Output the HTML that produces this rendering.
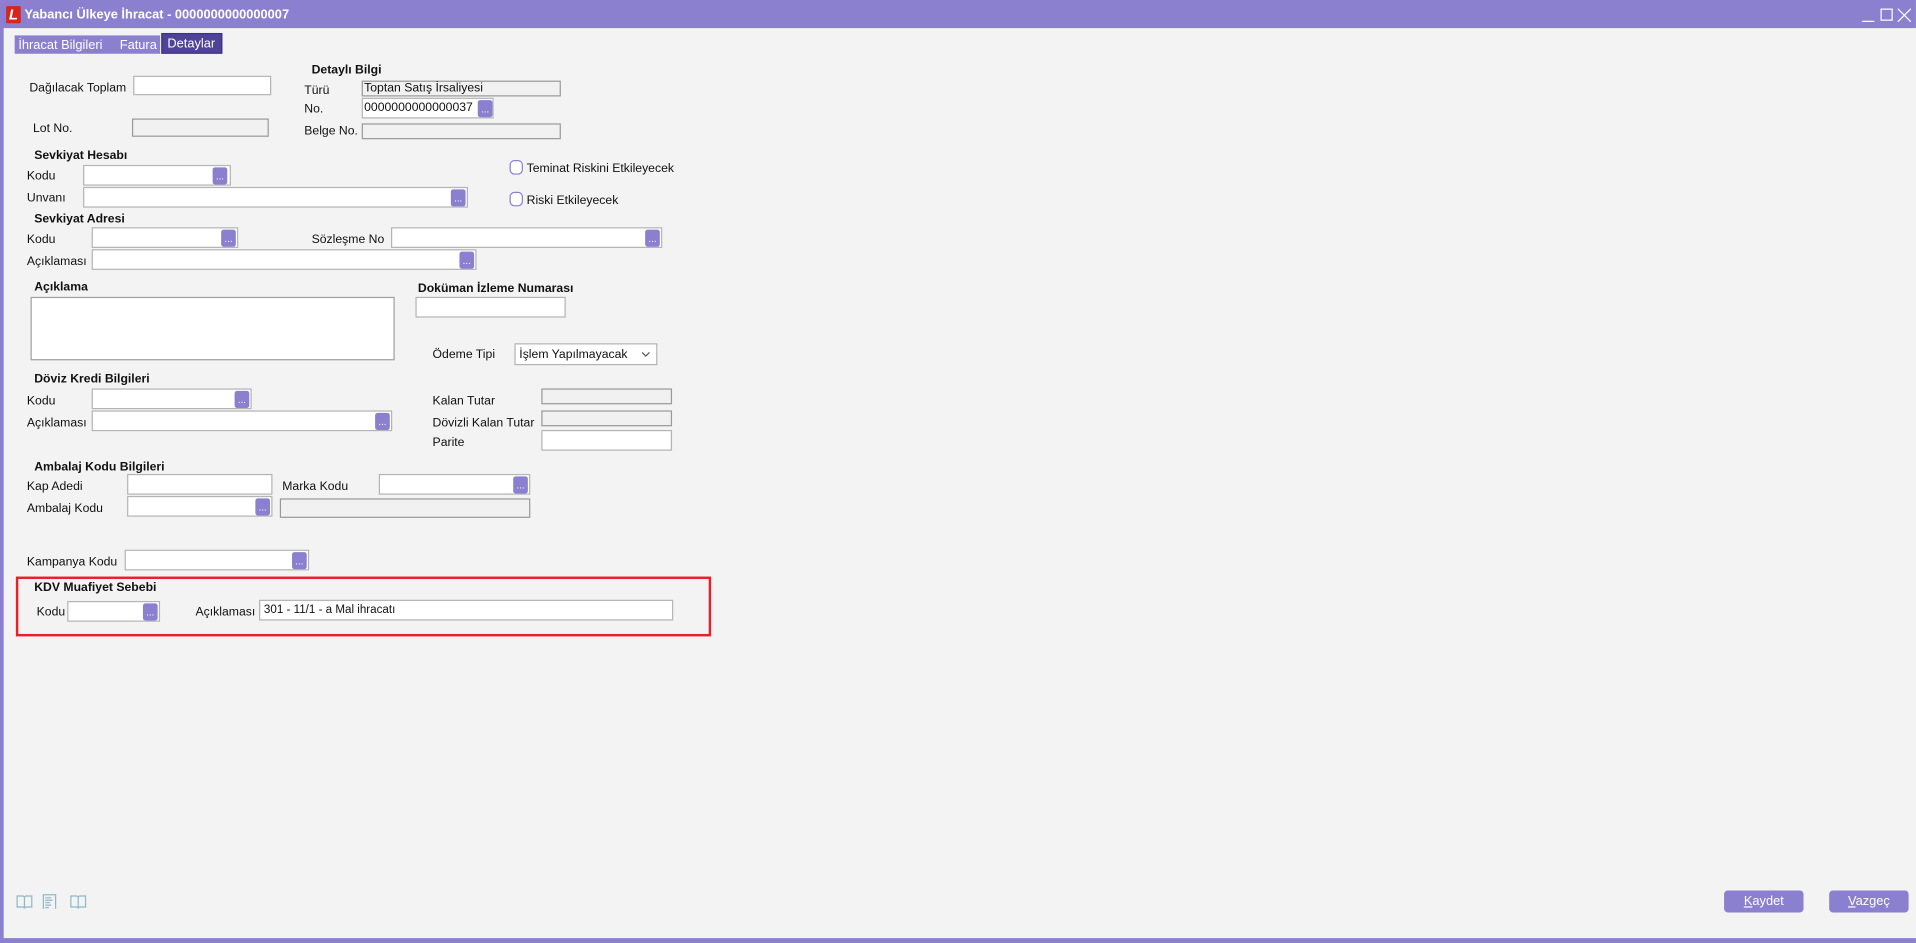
<!DOCTYPE html>
<html><head><meta charset="utf-8"><style>
html,body{margin:0;padding:0;width:1916px;height:943px;overflow:hidden;background:#f3f3f3;}
#w{position:absolute;left:0;top:0;width:1568px;height:772px;transform:scale(1.2219,1.2215);transform-origin:0 0;background:#f3f3f3;font-family:"Liberation Sans",sans-serif;font-size:10px;color:#111;}
#w div{position:absolute;box-sizing:border-box;}
.t{white-space:nowrap;line-height:12px;margin-top:1px;}
.b{font-weight:bold;}
.i{background:#fff;border:1px solid #b4b4b4;}
.d{background:#f1f1f1;border:1px solid #9a9a9a;}
.btn{background:#8b7fcf;border-radius:2px;color:#fff;font-size:8px;text-align:center;line-height:16px;}
.cb{border:1px solid #8b7fcf;border-radius:4px;background:#fff;width:11px;height:12px;}
</style></head><body><div id="w">
<div style="left:0;top:0;width:1568px;height:23px;background:#8b7fcf"></div>
<div style="left:0;top:0;width:3px;height:772px;background:#8b7fcf"></div>
<div style="left:0;top:768px;width:1568px;height:4px;background:#8b7fcf"></div>
<div style="left:5px;top:5px;width:12px;height:14px;background:#d8261b;border-radius:1px;color:#fff;font-weight:bold;font-style:italic;font-size:12px;line-height:14px;text-align:center">L</div>
<div class="t b" style="left:20px;top:5px;color:#fff;font-size:10.5px">Yabancı Ülkeye İhracat - 0000000000000007</div>
<div style="left:1524px;top:17px;width:10px;height:1px;background:#fff"></div>
<div style="left:1539px;top:7px;width:10px;height:10px;border:1px solid #fff"></div>
<svg style="position:absolute;left:1553px;top:7px" width="11" height="11"><path d="M0 0L11 11M11 0L0 11" stroke="#fff" stroke-width="1"/></svg>
<div style="left:12px;top:29px;width:119px;height:15px;background:#8b7fcf"></div>
<div class="t" style="left:15px;top:30px;color:#fff;font-size:10.5px">İhracat Bilgileri</div>
<div class="t" style="left:98px;top:30px;color:#fff;font-size:10.5px">Fatura</div>
<div style="left:132px;top:27px;width:50px;height:17px;background:#4f4399;border:1px solid #3d3380"></div>
<div class="t" style="left:137px;top:29px;color:#fff;font-size:10.5px">Detaylar</div>

<div class="t b" style="left:255px;top:51px">Detaylı Bilgi</div>
<div class="t" style="left:24px;top:66px">Dağılacak Toplam</div><div class="i" style="left:109px;top:62px;width:113px;height:16px"></div>
<div class="t" style="left:249px;top:68px">Türü</div><div class="d" style="left:296px;top:66px;width:163px;height:13px"></div><div class="t" style="left:298px;top:66px">Toptan Satış İrsaliyesi</div>
<div class="t" style="left:249px;top:83px">No.</div><div class="i" style="left:296px;top:80px;width:108px;height:17px"></div><div class="t" style="left:298px;top:82px">0000000000000037</div><div class="btn" style="left:391px;top:82px;width:12px;height:14px">...</div>
<div class="t" style="left:27px;top:99px">Lot No.</div><div class="d" style="left:108px;top:97px;width:112px;height:15px"></div>
<div class="t" style="left:249px;top:101px">Belge No.</div><div class="d" style="left:296px;top:101px;width:163px;height:13px"></div>

<div class="t b" style="left:28px;top:121px">Sevkiyat Hesabı</div>
<div class="cb" style="left:417px;top:131px"></div><div class="t" style="left:431px;top:132px">Teminat Riskini Etkileyecek</div>
<div class="t" style="left:22px;top:138px">Kodu</div><div class="i" style="left:68px;top:135px;width:121px;height:17px"></div><div class="btn" style="left:174px;top:137px;width:12px;height:14px">...</div>
<div class="cb" style="left:417px;top:157px"></div><div class="t" style="left:431px;top:158px">Riski Etkileyecek</div>
<div class="t" style="left:22px;top:156px">Unvanı</div><div class="i" style="left:68px;top:153px;width:315px;height:17px"></div><div class="btn" style="left:369px;top:155px;width:12px;height:14px">...</div>

<div class="t b" style="left:28px;top:173px">Sevkiyat Adresi</div>
<div class="t" style="left:22px;top:190px">Kodu</div><div class="i" style="left:75px;top:186px;width:120px;height:17px"></div><div class="btn" style="left:181px;top:188px;width:12px;height:14px">...</div>
<div class="t" style="left:255px;top:190px">Sözleşme No</div><div class="i" style="left:320px;top:186px;width:222px;height:17px"></div><div class="btn" style="left:528px;top:188px;width:12px;height:14px">...</div>
<div class="t" style="left:22px;top:208px">Açıklaması</div><div class="i" style="left:75px;top:204px;width:315px;height:17px"></div><div class="btn" style="left:376px;top:206px;width:12px;height:14px">...</div>

<div class="t b" style="left:28px;top:229px">Açıklama</div><div class="i" style="left:25px;top:243px;width:298px;height:52px;border-color:#a0a0a0"></div>
<div class="t b" style="left:342px;top:230px">Doküman İzleme Numarası</div><div class="i" style="left:340px;top:243px;width:123px;height:17px"></div>
<div class="t" style="left:354px;top:284px">Ödeme Tipi</div><div class="i" style="left:421px;top:281px;width:117px;height:18px"></div><div class="t" style="left:425px;top:284px">İşlem Yapılmayacak</div>
<svg style="position:absolute;left:525px;top:288px" width="7" height="5"><path d="M0.5 0.5L3.5 3.5L6.5 0.5" fill="none" stroke="#555" stroke-width="1"/></svg>

<div class="t b" style="left:28px;top:304px">Döviz Kredi Bilgileri</div>
<div class="t" style="left:22px;top:322px">Kodu</div><div class="i" style="left:75px;top:318px;width:131px;height:17px"></div><div class="btn" style="left:192px;top:320px;width:12px;height:14px">...</div>
<div class="t" style="left:354px;top:322px">Kalan Tutar</div><div class="d" style="left:443px;top:318px;width:107px;height:13px"></div>
<div class="t" style="left:22px;top:340px">Açıklaması</div><div class="i" style="left:75px;top:336px;width:246px;height:17px"></div><div class="btn" style="left:307px;top:338px;width:12px;height:14px">...</div>
<div class="t" style="left:354px;top:340px">Dövizli Kalan Tutar</div><div class="d" style="left:443px;top:336px;width:107px;height:13px"></div>
<div class="t" style="left:354px;top:356px">Parite</div><div class="i" style="left:443px;top:352px;width:107px;height:17px"></div>

<div class="t b" style="left:28px;top:376px">Ambalaj Kodu Bilgileri</div>
<div class="t" style="left:22px;top:392px">Kap Adedi</div><div class="i" style="left:104px;top:388px;width:119px;height:17px"></div>
<div class="t" style="left:231px;top:392px">Marka Kodu</div><div class="i" style="left:310px;top:388px;width:124px;height:17px"></div><div class="btn" style="left:420px;top:390px;width:12px;height:14px">...</div>
<div class="t" style="left:22px;top:410px">Ambalaj Kodu</div><div class="i" style="left:104px;top:406px;width:119px;height:17px"></div><div class="btn" style="left:209px;top:408px;width:12px;height:14px">...</div>
<div class="d" style="left:229px;top:408px;width:205px;height:16px"></div>

<div class="t" style="left:22px;top:454px">Kampanya Kodu</div><div class="i" style="left:102px;top:450px;width:151px;height:17px"></div><div class="btn" style="left:239px;top:452px;width:12px;height:14px">...</div>

<div style="left:13px;top:472px;width:569px;height:49px;border:2px solid #e8202a"></div>
<div class="t b" style="left:28px;top:475px">KDV Muafiyet Sebebi</div>
<div class="t" style="left:30px;top:495px">Kodu</div><div class="i" style="left:55px;top:492px;width:76px;height:17px"></div><div class="btn" style="left:117px;top:494px;width:12px;height:14px">...</div>
<div class="t" style="left:160px;top:495px">Açıklaması</div><div class="i" style="left:212px;top:491px;width:339px;height:17px"></div><div class="t" style="left:216px;top:493px;font-size:9.5px">301 - 11/1 - a Mal ihracatı</div>

<svg style="position:absolute;left:13px;top:731px" width="60" height="13" fill="none" stroke="#8fb8c8" stroke-width="1">
<path d="M1 2.5h5l1 1 1-1h5v9h-5l-1 1-1-1h-5z M7 3.5v8"/>
<rect x="22.5" y="1.5" width="10" height="12"/><path d="M24 4h5M24 6h6M24 8h4M24 10h5M24 12h3"/>
<path d="M45 2.5h5l1 1 1-1h5v9h-5l-1 1-1-1h-5z M51 3.5v8"/>
</svg>
<div class="t" style="left:1411px;top:728px;width:65px;height:18px;background:#8b7fcf;border-radius:3px;color:#fff;text-align:center;line-height:18px;font-size:10.5px"><u>K</u>aydet</div>
<div class="t" style="left:1497px;top:728px;width:65px;height:18px;background:#8b7fcf;border-radius:3px;color:#fff;text-align:center;line-height:18px;font-size:10.5px"><u>V</u>azgeç</div>
</div></body></html>
